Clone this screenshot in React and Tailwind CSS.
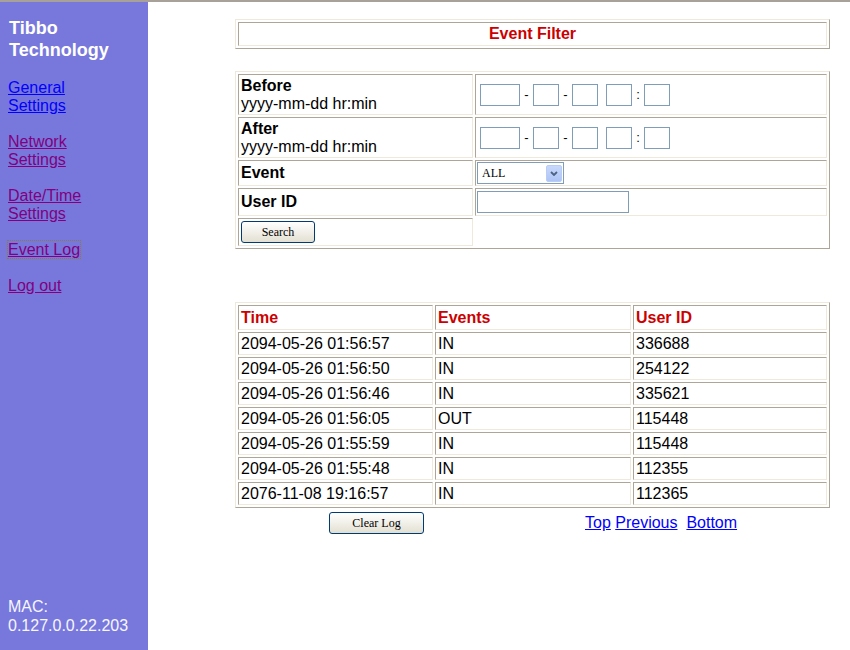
import React from 'react'

// raised table frame + sunken cells, like an old border=1 table
const frame = "border border-solid border-t-[#efe9dc] border-l-[#efe9dc] border-r-[#aca598] border-b-[#aca598] border-separate border-spacing-[2px] table-fixed";
const cell = "border border-solid border-t-[#aca598] border-l-[#aca598] border-r-[#efe9dc] border-b-[#efe9dc] p-0 align-middle";
const box = "block h-[22px] border border-solid border-[#7f9db9] bg-white outline-none";
const xpButton = "h-[22px] rounded-[3px] border border-solid border-[#003c74] bg-gradient-to-b from-white to-[#e3e0d2] font-['Liberation_Serif',serif] text-[12px] leading-[18px] text-black";

const logRows = [
    ["2094-05-26 01:56:57", "IN", "336688"],
    ["2094-05-26 01:56:50", "IN", "254122"],
    ["2094-05-26 01:56:46", "IN", "335621"],
    ["2094-05-26 01:56:05", "OUT", "115448"],
    ["2094-05-26 01:55:59", "IN", "115448"],
    ["2094-05-26 01:55:48", "IN", "112355"],
    ["2076-11-08 19:16:57", "IN", "112365"],
];

const DateFields = () => (
    <div className="flex items-center ml-[4px] text-[13px] text-black">
        <input className={`${box} w-[40px]`} />
        <span className="w-[13px] text-center">-</span>
        <input className={`${box} w-[26px]`} />
        <span className="w-[13px] text-center">-</span>
        <input className={`${box} w-[26px]`} />
        <span className="w-[8px]" />
        <input className={`${box} w-[26px]`} />
        <span className="w-[12px] text-center">:</span>
        <input className={`${box} w-[26px]`} />
    </div>
);

const SideLink = ({ children, visited, focused }) => (
    <div className="mb-[18px]">
        <a
            href="#"
            className={
                visited
                    ? focused
                        ? "underline text-[#800080] outline outline-1 outline-dotted outline-[#8a7d3c]"
                        : "underline text-[#800080]"
                    : "underline text-[#0000ff]"
            }
        >
            {children}
        </a>
    </div>
);

const App = () => {
    return (
        <div className="w-[850px] h-[650px] bg-white font-['Liberation_Sans',Arial,sans-serif] text-[16px] leading-[18px] text-black overflow-hidden">
            <div className="h-[2px] bg-[#a8a199]" />
            <div className="flex h-[648px]">
                {/* Left menu frame */}
                <aside className="w-[148px] shrink-0 bg-[#7878dc] flex flex-col pl-[8px]">
                    <h3 className="mt-[15px] ml-[1px] text-[18px] leading-[22px] font-bold text-white">
                        Tibbo<br />Technology
                    </h3>
                    <div className="mt-[18px]">
                        <SideLink>General<br />Settings</SideLink>
                        <SideLink visited>Network<br />Settings</SideLink>
                        <SideLink visited>Date/Time<br />Settings</SideLink>
                        <SideLink visited focused>Event Log</SideLink>
                        <SideLink visited>Log out</SideLink>
                    </div>
                    <div className="mt-auto pb-[15px] leading-[19px] text-[#f6f6ff]">
                        MAC:<br />0.127.0.0.22.203
                    </div>
                </aside>

                {/* Main frame */}
                <main className="flex-1 pl-[87px] pt-[17px]">
                    <table className={`${frame} w-[595px]`}>
                        <tbody>
                            <tr>
                                <td className={`${cell} h-[24px] text-center font-bold text-[#cc0000]`}>Event Filter</td>
                            </tr>
                        </tbody>
                    </table>

                    <table className={`${frame} w-[595px] mt-[22px]`}>
                        <tbody>
                            <tr>
                                <td className={`${cell} w-[235px] h-[41px] pl-[2px]`}>
                                    <b>Before</b><br />yyyy-mm-dd hr:min
                                </td>
                                <td className={`${cell} w-[352px]`}><DateFields /></td>
                            </tr>
                            <tr>
                                <td className={`${cell} h-[41px] pl-[2px]`}>
                                    <b>After</b><br />yyyy-mm-dd hr:min
                                </td>
                                <td className={cell}><DateFields /></td>
                            </tr>
                            <tr>
                                <td className={`${cell} h-[26px] pl-[2px] font-bold`}>Event</td>
                                <td className={cell}>
                                    <div className="ml-[1px] w-[87px] h-[22px] border border-solid border-[#7f9db9] bg-white flex items-center justify-between pl-[4px] pr-[1px]">
                                        <span className="font-['Liberation_Serif',serif] text-[12px] leading-[14px]">ALL</span>
                                        <span className="w-[16px] h-[17px] rounded-[2px] bg-gradient-to-b from-[#c8d8fb] to-[#aec4f6] border border-solid border-[#b9ccf5] flex items-center justify-center">
                                            <svg width="8" height="5" viewBox="0 0 8 5">
                                                <path d="M1 1l3 3 3-3" fill="none" stroke="#4d6185" strokeWidth="1.8" />
                                            </svg>
                                        </span>
                                    </div>
                                </td>
                            </tr>
                            <tr>
                                <td className={`${cell} h-[28px] pl-[2px] font-bold`}>User ID</td>
                                <td className={cell}>
                                    <input className={`${box} ml-[1px] w-[152px]`} />
                                </td>
                            </tr>
                            <tr>
                                <td className={`${cell} h-[28px]`}>
                                    <button className={`${xpButton} ml-[2px] w-[74px]`}>Search</button>
                                </td>
                                <td className="p-0" />
                            </tr>
                        </tbody>
                    </table>

                    <table className={`${frame} w-[595px] mt-[53px]`}>
                        <tbody>
                            <tr className="text-[#cc0000] font-bold">
                                <td className={`${cell} w-[195px] h-[25px] pl-[2px]`}>Time</td>
                                <td className={`${cell} w-[196px] pl-[2px]`}>Events</td>
                                <td className={`${cell} w-[194px] pl-[2px]`}>User ID</td>
                            </tr>
                            {logRows.map(([time, ev, uid]) => (
                                <tr key={time + uid}>
                                    <td className={`${cell} h-[23px] pl-[2px]`}>{time}</td>
                                    <td className={`${cell} pl-[2px]`}>{ev}</td>
                                    <td className={`${cell} pl-[2px]`}>{uid}</td>
                                </tr>
                            ))}
                        </tbody>
                    </table>

                    <div className="flex items-center mt-[4px]">
                        <button className={`${xpButton} ml-[94px] w-[95px]`}>Clear Log</button>
                        <div className="ml-[161px] whitespace-pre">
                            <a href="#" className="underline text-[#0000ff]">Top</a>
                            {" "}
                            <a href="#" className="underline text-[#0000ff]">Previous</a>
                            {"\u00a0 "}
                            <a href="#" className="underline text-[#0000ff]">Bottom</a>
                        </div>
                    </div>
                </main>
            </div>
        </div>
    );
};

export default App;
